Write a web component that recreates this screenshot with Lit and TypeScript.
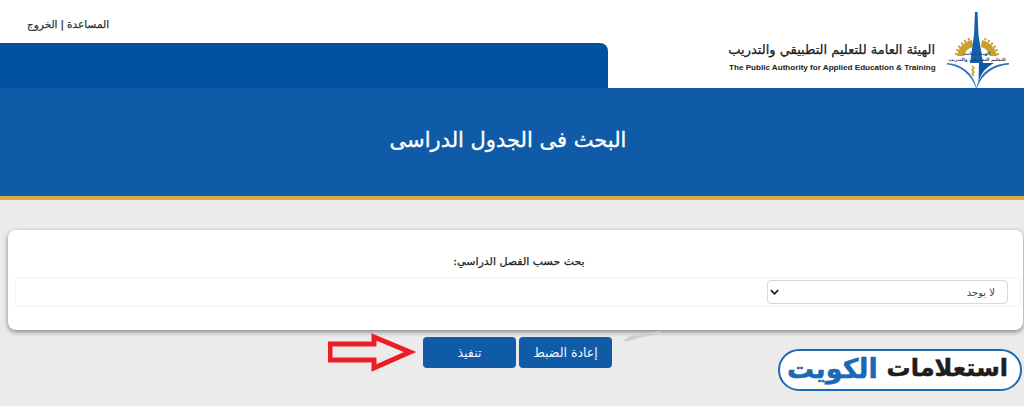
import { LitElement, html, css, svg } from "lit";
import { customElement } from "lit/decorators.js";

const logo = svg`<svg class="logo" viewBox="0 0 64 78" width="64" height="78" aria-hidden="true">
  <path d="M11 46 A19 19 0 0 1 26 30 L27 37 A12 12 0 0 0 18 46 Z" fill="#c9a02c"/>
  <path d="M51 46 A20 20 0 0 0 36 30 L35 37 A13 13 0 0 1 44 46 Z" fill="#c9a02c"/>
  <path d="M10 45 A21 21 0 0 1 25 28.5 M52 45 A21 21 0 0 0 37 28.5" fill="none" stroke="#c9a02c" stroke-width="2.4" stroke-dasharray="2 2"/>
  <path d="M29 2 L31.5 2 L32.5 25 L37 53 L24 53 L28 25 Z" fill="#1261ad"/>
  <path d="M33 53 L48 53 C41 57 35 62 32.5 72 Z" fill="#0d56a3"/>
  <path d="M1 53 C15 54 27 62 30.5 78 C34 62 46 54 63 53 L63 54.6 C48 56 36 64 31 78 L30 78 C25 64 14 56 1 54.6 Z" fill="#2b74b8"/>
  <text class="lt" x="31" y="45" text-anchor="middle">الهيئة العامة</text>
  <text class="lt" x="31" y="51" text-anchor="middle">للتعليم التطبيقي والتدريب</text>
  <path d="M26 56 l2 2 l-2 2 l2 2 l-2 2 l2 2" fill="none" stroke="#c9a02c" stroke-width="1.6"/>
</svg>`;

const arrow = svg`<svg class="arrow" viewBox="0 0 92 44" width="92" height="44" aria-hidden="true">
  <path d="M2 12 H46 V5 L82 20 L46 36 V28 H2 Z" fill="none" stroke="#ee1c25" stroke-width="5" stroke-linejoin="miter"/>
</svg>`;

const smudge = svg`<svg class="smudge" viewBox="0 0 40 12" width="40" height="12" aria-hidden="true">
  <path d="M1 11 L8 6 L16 5 L26 3 L39 1 L37 4 L26 6 L16 8 L7 11 Z" fill="#cfcfcf"/>
</svg>`;

@customElement("app-root")
export class AppRoot extends LitElement {
  static styles = css`
    :host {
      display: block;
      width: 1024px;
      height: 406px;
      overflow: hidden;
      position: relative;
      background: #ebebeb;
      font-family: "DejaVu Sans", "Noto Sans", sans-serif;
      color: #222;
    }
    .header {
      height: 88px;
      background: #fff;
      display: flex;
      justify-content: space-between;
    }
    .left {
      width: 608px;
      display: flex;
      flex-direction: column;
      justify-content: space-between;
    }
    .links {
      padding: 17px 0 0 27px;
      font-size: 10.5px;
      line-height: 14px;
      color: #333;
      -webkit-text-stroke: 0.25px #333;
      display: flex;
      gap: 3px;
    }
    .tab {
      height: 45px;
      background: #0051a0;
      border-top-right-radius: 8px;
    }
    .brand {
      display: flex;
      align-items: flex-end;
      gap: 11px;
      padding-right: 14px;
    }
    .brand-text {
      width: 206px;
      padding-bottom: 15px;
      display: flex;
      flex-direction: column;
      gap: 4px;
    }
    .brand-ar {
      direction: rtl;
      font-size: 13px;
      line-height: 16px;
      color: #222;
      -webkit-text-stroke: 0.25px #222;
      white-space: nowrap;
    }
    .brand-en {
      font-family: "Liberation Sans", Arial, sans-serif;
      font-weight: 700;
      font-size: 8.1px;
      line-height: 11px;
      color: #222;
      white-space: nowrap;
    }
    .logo {
      display: block;
    }
    .lt {
      font-size: 4.4px;
      font-weight: 700;
      fill: #24406b;
      direction: rtl;
    }
    .hero {
      height: 108px;
      background-color: #0f5ba8;
      background-image: radial-gradient(#2a6db2 0.6px, transparent 0.7px);
      background-size: 6px 6px;
      border-bottom: 4px solid #d9ac46;
      display: flex;
      align-items: center;
      justify-content: center;
      padding-right: 8px;
    }
    h1 {
      margin: 0 0 5px;
      font-size: 21px;
      line-height: 26px;
      font-weight: 400;
      -webkit-text-stroke: 0.35px #fff;
      color: #fff;
    }
    .main {
      padding: 30px 1px 0 8px;
    }
    .card {
      height: 100px;
      box-sizing: border-box;
      background: #fff;
      border-radius: 8px;
      box-shadow: 0 2px 5px rgba(0, 0, 0, 0.45);
      padding: 24px 3px 0 7px;
      display: flex;
      flex-direction: column;
      align-items: stretch;
    }
    .label {
      direction: rtl;
      text-align: center;
      font-size: 11px;
      line-height: 16px;
      -webkit-text-stroke: 0.25px #222;
      color: #222;
      height: 23px;
      padding-left: 3px;
    }
    .row {
      height: 30px;
      box-sizing: border-box;
      border: 1px solid #f4f4f4;
      padding: 2px 11px 0 0;
      display: flex;
      justify-content: flex-end;
    }
    .select {
      width: 241px;
      height: 24px;
      box-sizing: border-box;
      border: 1px solid #d8d8d8;
      border-radius: 4px;
      background: #fff;
      display: flex;
      align-items: center;
      justify-content: space-between;
      padding: 0 12px 0 2px;
      font-size: 10px;
      color: #444;
    }
    .chev {
      display: block;
    }
    .actions {
      display: flex;
      gap: 3px;
      padding: 7px 0 0 415px;
    }
    .btn {
      width: 93px;
      height: 31px;
      box-sizing: border-box;
      border: 0;
      border-radius: 4px;
      background: #0f5ba8;
      color: #f2f6fb;
      font-family: inherit;
      font-size: 12.5px;
      padding: 0;
    }
    .arrow {
      position: absolute;
      left: 328px;
      top: 332px;
    }
    .smudge {
      position: absolute;
      left: 622px;
      top: 330px;
      filter: blur(0.6px);
    }
    .badge {
      position: absolute;
      left: 778px;
      top: 349px;
      width: 244px;
      height: 42px;
      box-sizing: border-box;
      border: 2px solid #1b69b5;
      border-radius: 21px;
      background: #fff;
      display: flex;
      align-items: center;
      justify-content: space-between;
      padding: 0 12px 4px 7px;
      font-size: 24px;
      font-weight: 700;
      color: #1d1d1d;
      -webkit-text-stroke: 0.5px #1d1d1d;
      white-space: nowrap;
    }
    .badge b {
      color: #1b69b5;
      -webkit-text-stroke: 0.5px #1b69b5;
      font-size: 27px;
      font-weight: 700;
    }
  `;

  render() {
    return html`
      <div class="header">
        <div class="left">
          <div class="links"><span>الخروج</span><span>|</span><span>المساعدة</span></div>
          <div class="tab"></div>
        </div>
        <div class="brand">
          <div class="brand-text">
            <div class="brand-ar">الهيئة العامة للتعليم التطبيقي والتدريب</div>
            <div class="brand-en">The Public Authority for Applied Education &amp; Training</div>
          </div>
          ${logo}
        </div>
      </div>
      <div class="hero"><h1>البحث فى الجدول الدراسى</h1></div>
      <div class="main">
        <div class="card">
          <div class="label">بحث حسب الفصل الدراسي:</div>
          <div class="row">
            <div class="select">
              <svg class="chev" viewBox="0 0 10 6" width="9" height="6" aria-hidden="true"><path d="M1 1 L5 5 L9 1" fill="none" stroke="#222" stroke-width="2"/></svg>
              <span>لا يوجد</span>
            </div>
          </div>
        </div>
        <div class="actions">
          <button class="btn">تنفيذ</button>
          <button class="btn">إعادة الضبط</button>
        </div>
      </div>
      ${smudge}
      ${arrow}
      <div class="badge"><b>الكويت</b><span>استعلامات</span></div>
    `;
  }
}
